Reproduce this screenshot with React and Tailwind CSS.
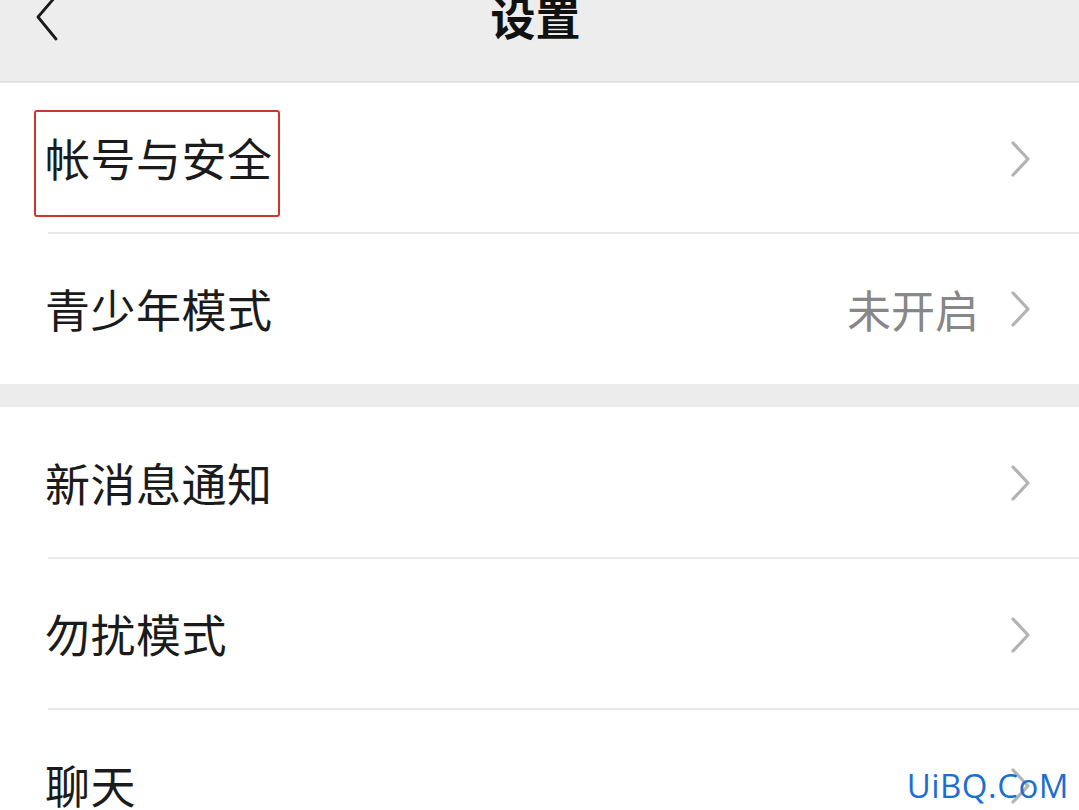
import React from "react";

const font = { fontFamily: '"Noto Sans CJK SC", "Noto Sans", sans-serif' };

function Chevron() {
  return (
    <svg width="24" height="38" viewBox="0 0 24 38" className="shrink-0">
      <polyline points="4,3 19,19 4,35" fill="none" stroke="#b3b3b3" strokeWidth="3.2" strokeLinecap="round" strokeLinejoin="round" />
    </svg>
  );
}

function Row({ label, value, boxed, divider = true, h = "h-[151px]" }) {
  return (
    <div className={`relative bg-white ${h}`}>
      <div className="flex h-full items-center pl-[45px] pr-[46px]">
        <div className="relative flex-1">
          {boxed && (
            <div className="absolute left-[-11px] top-[-25px] h-[107px] w-[246px] rounded-[3px] border-[2.5px] border-[#c9372d]" />
          )}
          <span className="text-[45px] leading-none tracking-[0.5px] text-[#1b1b1b]">{label}</span>
        </div>
        {value && <span className="mr-[30px] text-[44px] leading-none text-[#878787]">{value}</span>}
        <Chevron />
      </div>
      {divider && <div className="absolute bottom-0 left-[48px] right-0 h-[2px] bg-[#e8e8e8]" />}
    </div>
  );
}

export default function App() {
  return (
    <div className="relative h-[810px] w-[1079px] overflow-hidden bg-white" style={font}>
      <div className="h-[83px] border-b-2 border-[#e3e3e3] bg-[#ededed]">
        <div className="relative flex h-[32px] items-center justify-center">
          <svg width="30" height="48" viewBox="0 0 30 48" className="absolute left-[34px] top-[-7px]">
            <polyline points="22,3 4,24 22,46" fill="none" stroke="#1a1a1a" strokeWidth="2.8" strokeLinecap="round" strokeLinejoin="round" />
          </svg>
          <span className="ml-[-8px] text-[45px] font-bold leading-none text-[#111]">设置</span>
        </div>
      </div>
      <Row label="帐号与安全" boxed h="h-[151px]" />
      <Row label="青少年模式" value="未开启" divider={false} h="h-[150px]" />
      <div className="h-[23px] bg-[#ececec]" />
      <Row label="新消息通知" h="h-[152px]" />
      <Row label="勿扰模式" h="h-[151px]" />
      <Row label="聊天" divider={false} h="h-[151px]" />
      <div className="absolute bottom-[8px] right-[10px] text-[33px] leading-none tracking-[0.5px] text-[#1c6fd0]" style={{ fontFamily: '"Open Sans", "DejaVu Sans", sans-serif' }}>
        UiBQ.CoM
      </div>
    </div>
  );
}
